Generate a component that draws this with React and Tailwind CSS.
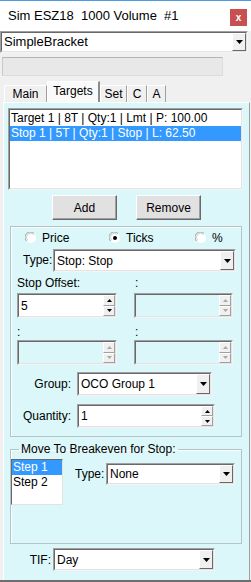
const Arrow = () => (
  <svg width="7" height="4" viewBox="0 0 7 4">
    <path d="M0 0h7L3.5 4z" fill="#000" />
  </svg>
);

const Combo = ({ className, text }) => (
  <div className={`flex bg-white border border-t-[#a0a0a0] border-l-[#a0a0a0] border-b-[#f4f4f4] border-r-[#f4f4f4] ${className}`}>
    <div className="flex flex-1 border border-t-[#696969] border-l-[#696969] border-b-[#e3e3e3] border-r-[#e3e3e3]">
      <span className="flex-1 flex items-center pl-[2px] whitespace-nowrap">{text}</span>
      <div className="w-[14px] bg-[#f0f0f0] border border-t-white border-l-white border-b-[#696969] border-r-[#696969] flex items-center justify-center">
        <Arrow />
      </div>
    </div>
  </div>
);

const Spin = ({ className, text, disabled }) => {
  const c = disabled ? "#a8a8a8" : "#000";
  return (
    <div className={`flex border border-t-[#a0a0a0] border-l-[#a0a0a0] border-b-[#f4f4f4] border-r-[#f4f4f4] ${disabled ? "bg-transparent" : "bg-white"} ${className}`}>
      <div className="flex flex-1 border border-t-[#696969] border-l-[#696969] border-b-[#e3e3e3] border-r-[#e3e3e3]">
        <span className="flex-1 flex items-center pl-[2px]">{text}</span>
        <div className="w-[12px] flex flex-col">
          <div className="flex-1 bg-[#f0f0f0] border border-t-white border-l-white border-b-[#a0a0a0] border-r-[#a0a0a0] flex items-center justify-center">
            <svg width="5" height="3" viewBox="0 0 5 3">
              <path d="M0 3h5L2.5 0z" fill={c} />
            </svg>
          </div>
          <div className="flex-1 bg-[#f0f0f0] border border-t-white border-l-white border-b-[#a0a0a0] border-r-[#a0a0a0] flex items-center justify-center">
            <svg width="5" height="3" viewBox="0 0 5 3">
              <path d="M0 0h5L2.5 3z" fill={c} />
            </svg>
          </div>
        </div>
      </div>
    </div>
  );
};

const Radio = ({ checked }) => (
  <svg width="12" height="12" viewBox="0 0 12 12">
    <circle cx="6" cy="6" r="5" fill="#fff" />
    <path d="M1.5 9A5 5 0 0 1 9 1.5" fill="none" stroke="#a0a0a0" strokeWidth="1" />
    <path d="M2.6 8.2A3.9 3.9 0 0 1 8.2 2.6" fill="none" stroke="#d0d0d0" strokeWidth="1" />
    {checked && <circle cx="6" cy="6" r="2" fill="#000" />}
  </svg>
);

const Tab = ({ label, active, className }) => (
  <div
    className={`flex items-center justify-center border-t border-l border-t-white border-l-white ${
      active ? "h-[21px] bg-[#fafafa] border-r-2 border-r-[#8c8c8c] pb-[2px]" : "h-[17px] bg-[#f0f0f0] border-r border-r-[#a0a0a0]"
    } ${className}`}
  >
    {label}
  </div>
);

const Button = ({ label, className }) => (
  <div className={`h-[25px] flex items-center justify-center bg-[#e1e1e1] border border-t-white border-l-white border-b-[#696969] border-r-[#696969] shadow-[inset_-1px_-1px_0_#a0a0a0] ${className}`}>
    {label}
  </div>
);

const App = () => {
  return (
    <div className="w-[251px] h-[582px] bg-[#f0f0f0] flex flex-col border-t border-t-[#4d9be0] border-b-2 border-b-[#6e6e6e] text-[12px] text-black font-['Liberation_Sans',Arial,sans-serif] overflow-hidden">
      {/* title */}
      <div className="h-[30px] shrink-0 bg-white flex items-start justify-between">
        <span className="pl-[8px] pt-[8px] leading-[14px] text-[13px] whitespace-pre">Sim ESZ18  1000 Volume  #1</span>
        <div className="mt-[8px] mr-[4px] w-[17px] h-[17px] bg-[#c75050] text-white text-[10px] font-bold flex items-center justify-center leading-none">
          x
        </div>
      </div>

      <Combo className="h-[22px] mr-[3px] text-[13px] shrink-0" text="SimpleBracket" />

      <div className="mt-[4px] ml-[2px] w-[221px] h-[19px] shrink-0 bg-[#e8e8e8] border border-t-[#b4b4b4] border-l-[#c8c8c8] border-r-[#dcdcdc] border-b-[#dcdcdc]" />

      {/* tabs */}
      <div className="mt-[5px] h-[21px] shrink-0 flex items-end pl-[4px]">
        <Tab label="Main" className="w-[43px]" />
        <Tab label="Targets" active className="w-[53px]" />
        <Tab label="Set" className="w-[27px]" />
        <Tab label="C" className="w-[20px]" />
        <Tab label="A" className="w-[19px]" />
      </div>

      {/* panel */}
      <div className="flex-1 ml-[3px] mr-[1px] bg-[#dbf7f9] border-t border-l border-t-white border-l-white border-r border-r-[#a0a0a0] flex flex-col">
        {/* list */}
        <div className="mt-[5px] ml-[4px] w-[235px] h-[82px] bg-white border border-t-[#a0a0a0] border-l-[#a0a0a0] border-b-[#f4f4f4] border-r-[#f4f4f4]">
          <div className="h-full border border-t-[#696969] border-l-[#696969] border-b-[#e3e3e3] border-r-[#e3e3e3] pt-[1px]">
            <div className="h-[15px] leading-[15px] pl-[1px] whitespace-nowrap">Target 1 | 8T | Qty:1 | Lmt | P: 100.00</div>
            <div className="h-[15px] leading-[15px] pl-[1px] bg-[#3399ff] text-white whitespace-nowrap">Stop 1 | 5T | Qty:1 | Stop | L: 62.50</div>
          </div>
        </div>

        {/* buttons */}
        <div className="mt-[5px] flex">
          <Button label="Add" className="ml-[48px] w-[65px]" />
          <Button label="Remove" className="ml-[19px] w-[65px]" />
        </div>

        {/* group 1 */}
        <div className="mt-[6px] ml-[6px] w-[232px] h-[211px] border border-[#b4c4c6] shadow-[inset_1px_1px_0_#fff] flex flex-col">
          <div className="mt-[4px] h-[14px] flex items-center">
            <div className="ml-[14px] w-[84px] flex items-center gap-[5px]">
              <Radio />
              <span>Price</span>
            </div>
            <div className="w-[86px] flex items-center gap-[5px]">
              <Radio checked />
              <span>Ticks</span>
            </div>
            <div className="flex items-center gap-[5px]">
              <Radio />
              <span>%</span>
            </div>
          </div>

          <div className="mt-[4px] h-[23px] flex items-center">
            <span className="ml-[12px] w-[30px] -mt-[2px]">Type:</span>
            <Combo className="w-[183px] h-[23px]" text="Stop: Stop" />
          </div>

          <div className="mt-[4px] h-[14px] flex items-center">
            <span className="ml-[6px] w-[118px]">Stop Offset:</span>
            <span>:</span>
          </div>
          <div className="mt-[3px] h-[25px] flex">
            <Spin className="ml-[6px] w-[100px]" text="5" />
            <Spin className="ml-[17px] w-[99px]" disabled />
          </div>

          <div className="mt-[7px] h-[14px] flex items-center">
            <span className="ml-[6px] w-[118px]">:</span>
            <span>:</span>
          </div>
          <div className="mt-[1px] h-[25px] flex">
            <Spin className="ml-[6px] w-[100px]" disabled />
            <Spin className="ml-[17px] w-[99px]" disabled />
          </div>

          <div className="mt-[7px] h-[24px] flex items-center">
            <span className="w-[60px] text-right">Group:</span>
            <Combo className="ml-[6px] w-[135px] h-[24px]" text="OCO Group 1" />
          </div>

          <div className="mt-[8px] h-[24px] flex items-center">
            <span className="w-[60px] text-right">Quantity:</span>
            <Spin className="ml-[6px] w-[138px] h-[24px]" text="1" />
          </div>
        </div>

        {/* group 2 */}
        <fieldset className="mt-[5px] ml-[6px] w-[232px] h-[102px] border border-[#b4c4c6] shadow-[inset_1px_1px_0_#fff] min-w-0">
          <legend className="ml-[8px] px-[2px] leading-[14px]">Move To Breakeven for Stop:</legend>
          <div className="flex items-start">
            <div className="mt-[3px] w-[52px] h-[46px] bg-white border border-t-[#696969] border-l-[#696969] border-b-[#e3e3e3] border-r-[#e3e3e3]">
              <div className="h-[15px] leading-[15px] pl-[1px] bg-[#3399ff] text-white">Step 1</div>
              <div className="h-[15px] leading-[15px] pl-[1px]">Step 2</div>
            </div>
            <span className="ml-[12px] mt-[9px] w-[31px]">Type:</span>
            <Combo className="mt-[7px] w-[129px] h-[22px]" text="None" />
          </div>
        </fieldset>

        {/* TIF */}
        <div className="mt-[4px] h-[23px] flex items-center">
          <span className="w-[49px] pr-[2px] text-right">TIF:</span>
          <Combo className="w-[162px] h-[23px]" text="Day" />
        </div>
      </div>
    </div>
  );
};

export default App;
